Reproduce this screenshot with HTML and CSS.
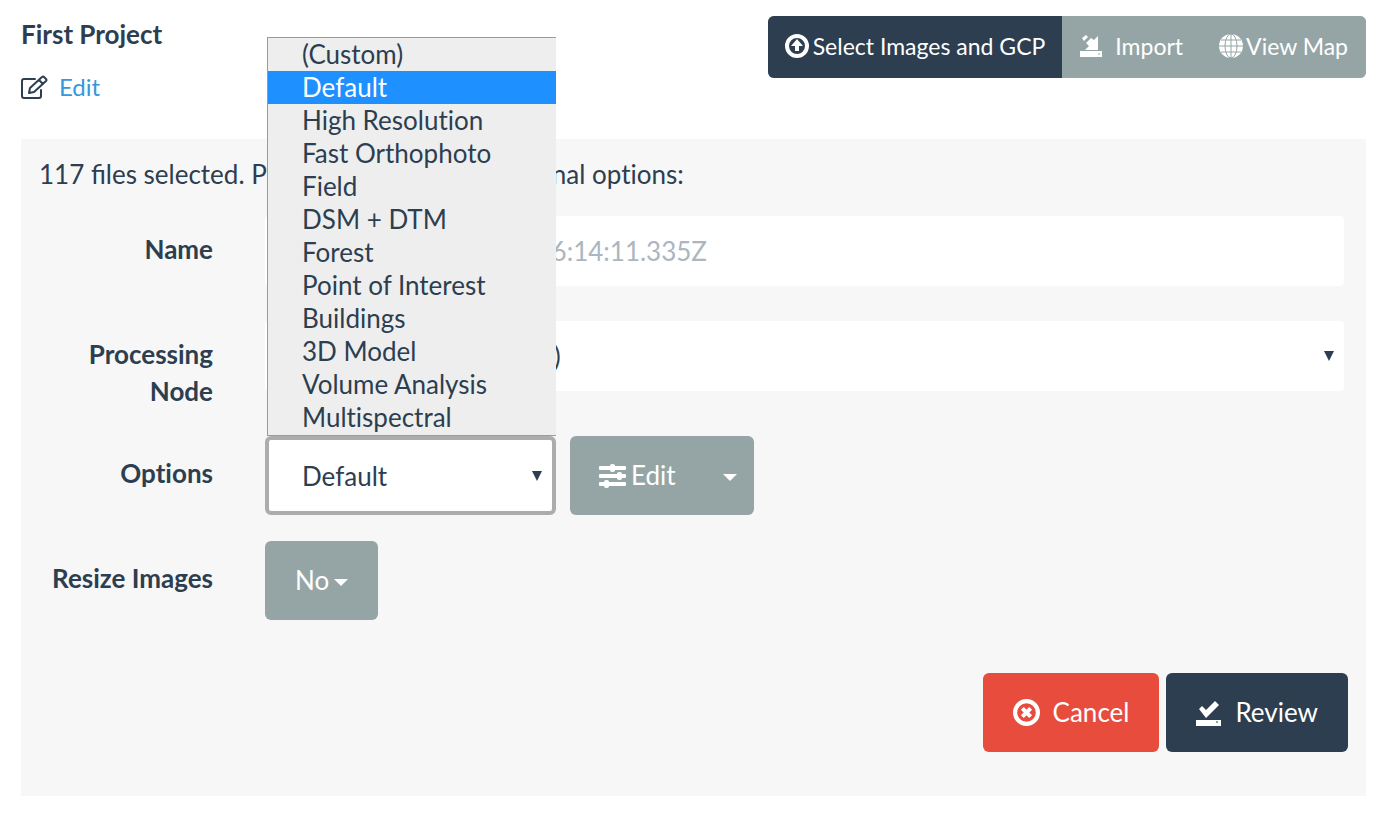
FILE: index.html
```html
<!DOCTYPE html>
<html lang="en">
<head>
<meta charset="utf-8">
<meta name="viewport" content="width=device-width, initial-scale=1">
<title>First Project</title>
<link rel="stylesheet" href="styles.css">
</head>
<body>
<main class="project">
  <header class="project-header">
    <div class="project-info">
      <h1 class="project-title">First Project</h1>
      <a class="edit-link" href="#edit">
        <svg class="icon-edit" viewBox="0 0 27 24" aria-hidden="true"><g fill="none" stroke="#2c3e50" stroke-width="2" stroke-linejoin="round" stroke-linecap="round"><path d="M14 4H3Q1 4 1 6v15q0 2 2 2h15q2 0 2-2v-6"/><path d="M8 18l1-5L21 2q1-1 2 0l2 2q1 1 0 2L13 17zM18 5l4 4"/></g></svg>
        <span>Edit</span>
      </a>
    </div>
    <div class="toolbar">
      <button class="tool tool-primary" type="button">
        <svg class="icon-upload" viewBox="0 0 24 24" aria-hidden="true"><circle cx="12" cy="12" r="10" fill="none" stroke="#fff" stroke-width="4"/><path fill="#fff" d="M12 5l6 7h-4v5h-4v-5H6z"/></svg>
        <span>Select Images and GCP</span>
      </button>
      <button class="tool tool-import" type="button">
        <svg class="icon-import" viewBox="0 0 22 24" aria-hidden="true"><path fill="#fff" d="M0 17h22v6H0zM18 2v14H5l4-4-3-3 5-5 3 2zM2 4l4-3 2 2-4 4z"/><path d="M18 20h2" stroke="#95a5a6"/></svg>
        <span>Import</span>
      </button>
      <button class="tool tool-map" type="button">
        <svg class="icon-globe" viewBox="0 0 24 24" aria-hidden="true"><circle cx="12" cy="12" r="12" fill="#fff"/><g fill="none" stroke="#95a5a6" stroke-width="1"><path d="M12 0v24M0 12h24M2 6h20M2 18h20"/><ellipse cx="12" cy="12" rx="6" ry="12"/></g></svg>
        <span>View Map</span>
      </button>
    </div>
  </header>

  <form class="panel">
    <p class="intro">117 <span class="ligatures">files</span> selected. Please check these additional options:</p>

    <div class="row row-name">
      <label class="row-label" for="name">Name</label>
      <input class="field field-text" id="name" type="text" placeholder="Task of 2019-05-13T06:14:11.335Z">
    </div>

    <div class="row">
      <label class="row-label" for="node">Processing Node</label>
      <div class="select-wrap">
        <select class="field" id="node"><option>node-odm-1 (queue: 0)</option></select>
        <svg class="arrow" viewBox="0 0 10 10" aria-hidden="true"><path d="M0 0h10L5 10z"/></svg>
      </div>
    </div>

    <div class="row row-tall">
      <label class="row-label" for="preset">Options</label>
      <div class="controls">
        <div class="select-wrap preset-wrap">
          <select class="field preset" id="preset"><option>Default</option></select>
          <svg class="arrow" viewBox="0 0 10 10" aria-hidden="true"><path d="M0 0h10L5 10z"/></svg>
          <ul class="preset-menu" role="listbox" aria-label="Options">
            <li role="option">(Custom)</li>
            <li class="selected" role="option" aria-selected="true">Default</li>
            <li role="option">High Resolution</li>
            <li role="option">Fast Orthophoto</li>
            <li role="option">Field</li>
            <li role="option">DSM + DTM</li>
            <li role="option">Forest</li>
            <li role="option">Point of Interest</li>
            <li role="option">Buildings</li>
            <li role="option">3D Model</li>
            <li role="option">Volume Analysis</li>
            <li role="option">Multispectral</li>
          </ul>
        </div>
        <div class="split">
          <button class="btn btn-edit" type="button">
            <svg class="icon-sliders" viewBox="0 0 27 24" aria-hidden="true"><g fill="#fff"><rect y="2" width="27" height="4" rx="1"/><rect y="10" width="27" height="4" rx="1"/><rect y="18" width="27" height="4" rx="1"/><rect x="11" width="5" height="8" rx="2"/><rect x="18" y="8" width="5" height="8" rx="2"/><rect x="5" y="16" width="5" height="8" rx="2"/></g></svg>
            <span>Edit</span>
          </button>
          <button class="btn btn-toggle" type="button" aria-label="More edit actions"><span class="caret"></span></button>
        </div>
      </div>
    </div>

    <div class="row row-tall">
      <label class="row-label" for="resize">Resize Images</label>
      <div class="controls">
        <button class="btn btn-no" id="resize" type="button"><span>No</span><span class="caret"></span></button>
      </div>
    </div>

    <div class="actions">
      <button class="btn btn-cancel" type="button">
        <svg class="icon-cancel" viewBox="0 0 26 26" aria-hidden="true"><circle cx="13" cy="13" r="11" fill="none" stroke="#fff" stroke-width="4"/><path d="M9 9l8 8M17 9l-8 8" stroke="#fff" stroke-width="4"/></svg>
        <span>Cancel</span>
      </button>
      <button class="btn btn-review" type="submit">
        <svg class="icon-review" viewBox="0 0 25 26" aria-hidden="true"><path fill="#fff" d="M0 20h25v6H0zM3 9l3-3 4 4 9-9 4 4-13 13z"/><path d="M20 22h2" stroke="#2c3e50"/></svg>
        <span>Review</span>
      </button>
    </div>
  </form>
</main>
</body>
</html>
```

FILE: styles.css
```css
* { box-sizing: border-box; }

body {
  margin: 0;
  background: #fff;
  color: #2c3e50;
  font: 26px/37px Lato, sans-serif;
  font-variant-ligatures: none;
}

button, input, select { font: inherit; font-variant-ligatures: none; color: inherit; margin: 0; }
button { border: 0; cursor: pointer; }
svg { display: block; flex: none; }

.ligatures { font-variant-ligatures: normal; }

.project { padding: 16px 23px 24px 21px; }

.project-header {
  display: flex;
  justify-content: space-between;
  align-items: flex-start;
  margin-bottom: 34px;
}

.project-title { margin: 0 0 15px; font-size: 26px; line-height: 37px; font-weight: 700; }

.edit-link {
  display: flex;
  align-items: center;
  gap: 11px;
  color: #3498db;
  font-size: 24px;
  text-decoration: none;
}
.icon-edit { width: 27px; height: 24px; }

.toolbar { display: flex; border-radius: 6px; overflow: hidden; background: #95a5a6; }

.tool {
  display: flex;
  align-items: center;
  height: 62px;
  padding: 0 18px 2px;
  background: #95a5a6;
  color: #fff;
  font-size: 23px;
  white-space: nowrap;
}
.tool-primary { gap: 4px; padding: 0 17px 2px; background: #2c3e50; }
.tool-import { gap: 13px; }
.tool-map { gap: 3px; }
.icon-upload, .icon-globe { width: 24px; height: 24px; }
.icon-import { width: 22px; height: 24px; }

.panel { padding: 17px 18px 44px; background: #f7f7f7; }
.intro { margin: 0 0 23px; }

.row {
  display: grid;
  grid-template-columns: 174px minmax(0, 1fr);
  column-gap: 52px;
  align-items: start;
  padding-right: 4px;
  margin-bottom: 26px;
}
.row-name { margin-bottom: 35px; }
.row-label { padding-top: 15px; font-weight: 700; text-align: right; }
.row-tall .row-label { padding-top: 19px; }

.field {
  display: block;
  width: 100%;
  height: 70px;
  padding: 0 34px;
  border: 0;
  border-radius: 4px;
  background: #fff;
  appearance: none;
  outline: 0;
}
.field-text { padding: 0 30px; }
.field::placeholder { color: #acb6c0; opacity: 1; }

.select-wrap { position: relative; }
.arrow {
  position: absolute;
  right: 10px;
  top: 50%;
  width: 10px;
  height: 10px;
  margin-top: -5px;
  fill: #2c3e50;
  pointer-events: none;
}

.controls { display: flex; gap: 14px; }
.preset-wrap { width: 291px; }
.preset { height: 79px; padding: 2px 33px 0; border: 4px solid #acacac; border-radius: 6px; }
.preset-wrap .arrow { right: 14px; }

.preset-menu {
  position: absolute;
  left: 2px;
  right: 0;
  bottom: 100%;
  margin: 0;
  padding: 0 0 1px;
  list-style: none;
  background: #eee;
  border: 1px solid #b39b59;
  border-right: 0;
}
.preset-menu li { height: 33px; padding-left: 34px; line-height: 33px; }
.preset-menu .selected { background: #1e90ff; color: #fff; }

.btn {
  display: flex;
  align-items: center;
  height: 79px;
  padding: 0 29px;
  border-radius: 6px;
  background: #95a5a6;
  color: #fff;
}
.split { display: flex; border-radius: 6px; overflow: hidden; }
.split .btn { border-radius: 0; }
.btn-edit { gap: 5px; }
.btn-toggle { padding: 0 17px 0 18px; }
.icon-sliders { width: 27px; height: 24px; }
.btn-no { gap: 5px; padding: 0 30px; }

.caret {
  margin-top: 4px;
  border-top: 7px solid #fff;
  border-left: 7px solid transparent;
  border-right: 7px solid transparent;
}

.actions { display: flex; justify-content: flex-end; gap: 7px; margin-top: 53px; }
.btn-cancel { gap: 13px; padding: 0 30px; background: #e74c3c; }
.btn-review { gap: 14px; padding: 0 30px; background: #2c3e50; }
.icon-cancel { width: 27px; height: 27px; }
.icon-review { width: 25px; height: 26px; }
```
